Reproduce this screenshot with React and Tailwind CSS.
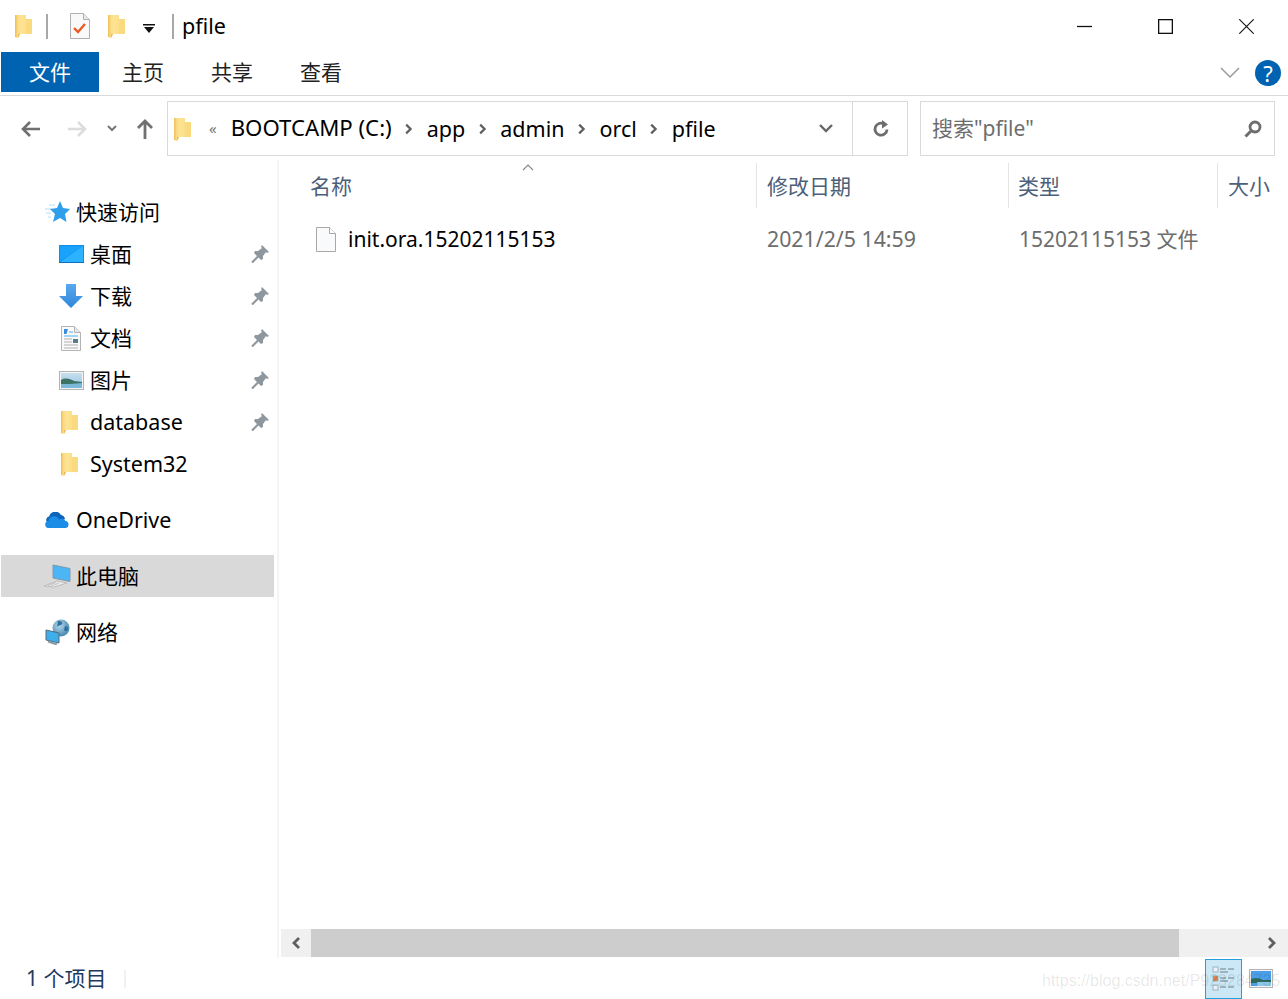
const Folder = ({ className = "" }) => (
  <svg viewBox="0 0 17 24" className={className}>
    <defs>
      <linearGradient id="fg" x1="0" y1="0" x2="1" y2="0">
        <stop offset="0" stopColor="#f7d16f" />
        <stop offset="0.3" stopColor="#fde394" />
        <stop offset="1" stopColor="#fbdb80" />
      </linearGradient>
    </defs>
    <path d="M0 1h11v4h6v15H5l-2 4-3-1z" fill="url(#fg)" />
    <path d="M11 5h6v15h-6z" fill="#fada7e" />
    <path d="M3 24V20h2z" fill="#e9bc58" />
    <path d="M0 1h1.500v22H0z" fill="#f0c460" />
  </svg>
);

const Pin = () => (
  <svg viewBox="0 0 18 18" className="h-[18px] w-[18px]">
    <path d="M11 0l7 7-2 1-1-1-3 4v3l-2 1-7-7 1-2h3l4-3-1-1z" fill="#8f979e" />
    <path d="M1 17.500l6-6" stroke="#8f979e" strokeWidth="2.200" />
  </svg>
);

const NavRow = ({ icon, label, pin, indent, selected, latin }) => (
  <div className={`flex h-[42px] items-center ${selected ? "ml-px w-[273px] bg-[#d9d9d9]" : "w-[274px]"}`}>
    <div className={`flex shrink-0 justify-center ${indent ? "ml-[56px] w-[30px]" : selected ? "ml-[41px] w-[30px]" : "ml-[42px] w-[30px]"}`}>{icon}</div>
    <span className={`ml-[4px] ${latin ? "text-[21.5px]" : "text-[21px]"} leading-none text-black`}>{label}</span>
    {pin && <span className="ml-auto mr-[5px] flex"><Pin /></span>}
  </div>
);

const Chevron = () => (
  <svg viewBox="0 0 10 14" className="mx-[13.5px] h-[12px] w-[8px] shrink-0">
    <path d="M1.500 1.500l5.500 5.500-5.500 5.500" fill="none" stroke="#5f5f5f" strokeWidth="2.800" />
  </svg>
);

const StarIcon = (
  <svg viewBox="0 0 26 22" className="h-[22px] w-[26px]">
    <path d="M1 8h7M2 12h5M4 16h3M5 4h6" stroke="#cfe9fb" strokeWidth="1.500" />
    <path d="M16 0l3 7 7 1-5 5 1.500 8-6.500-4-7 4 2-8-5-5 7-1z" fill="#2f9fec" />
  </svg>
);
const DesktopIcon = (
  <svg viewBox="0 0 25 18" className="h-[18px] w-[25px]">
    <rect width="25" height="18" fill="#0f8fe8" />
    <path d="M1 17L24 1v16z" fill="#2db2ff" />
    <path d="M1 1h23L1 16z" fill="#18a2fb" />
    <path d="M0 17h25v1H0z" fill="#0a70c0" />
  </svg>
);
const DownloadIcon = (
  <svg viewBox="0 0 24 24" className="h-[24px] w-[24px]">
    <defs>
      <linearGradient id="dl" x1="0" y1="0" x2="0" y2="1">
        <stop offset="0" stopColor="#5aa8ee" />
        <stop offset="1" stopColor="#2f86da" />
      </linearGradient>
    </defs>
    <path d="M7 0h10v12h7L12 24 0 12h7z" fill="url(#dl)" />
  </svg>
);
const DocIcon = (
  <svg viewBox="0 0 20 25" className="h-[25px] w-[20px]">
    <path d="M.5.500h13l6 6v18H.5z" fill="#fafafa" stroke="#b4b4b4" />
    <path d="M13.500.500v6h6" fill="#e6e6e6" stroke="#b4b4b4" />
    <path d="M3 3h4L5.500 8H3z" fill="#3a8be0" />
    <path d="M8 6h4M3 10h14" stroke="#8cc8f2" strokeWidth="1.500" />
    <path d="M3 13h8M3 16h8M3 19h14M3 22h14" stroke="#b0b0b0" />
    <rect x="12" y="13" width="5" height="4" fill="#5a7a8a" />
  </svg>
);
const PicIcon = (
  <svg viewBox="0 0 25 19" className="h-[19px] w-[25px]">
    <defs>
      <linearGradient id="sky" x1="0" y1="0" x2="0" y2="1">
        <stop offset="0" stopColor="#c9dfee" />
        <stop offset="1" stopColor="#8fc3e2" />
      </linearGradient>
    </defs>
    <rect x=".5" y=".5" width="24" height="18" fill="#f4f4f4" stroke="#b4b4b4" />
    <rect x="2" y="2" width="21" height="15" fill="url(#sky)" />
    <path d="M2 9c5-3 9-1 13 1l8 1v3H2z" fill="#3f7266" />
    <path d="M2 13h9l12-1v5H2z" fill="#7cb9d8" />
  </svg>
);
const CloudIcon = (
  <svg viewBox="0 0 25 16" className="h-[16px] w-[25px]">
    <path d="M3 11a3.500 3.500 0 0 1 1-6.500A6.500 6.500 0 0 1 16 3a5 5 0 0 1 4 4L12 11z" fill="#0d64b8" />
    <path d="M4 16a3.500 3.500 0 0 1-.5-7 5.500 5.500 0 0 1 10.500-1.500 4.500 4.500 0 0 1 6.500 1.500A3.600 3.600 0 0 1 21 16z" fill="#1c8de6" />
  </svg>
);
const PcIcon = (
  <svg viewBox="0 0 28 24" className="h-[24px] w-[28px]">
    <path d="M10 1l17 3.500v13L10 14z" fill="#4cb5f5" stroke="#7f99ab" />
    <path d="M1 22l13-5 10 2-13 4z" fill="#ececec" stroke="#bdbdbd" />
    <path d="M5 21.500l8-3M8 22l8-3" stroke="#c4c4c4" />
  </svg>
);
const NetIcon = (
  <svg viewBox="0 0 25 26" className="h-[26px] w-[25px]">
    <defs>
      <radialGradient id="gl" cx="0.4" cy="0.35" r="0.7">
        <stop offset="0" stopColor="#b7d8ea" />
        <stop offset="1" stopColor="#3f82ad" />
      </radialGradient>
    </defs>
    <circle cx="16" cy="9" r="8.500" fill="url(#gl)" />
    <path d="M13 2c3 0 5 1 4 3s-4 1-5 3M20 7c2 0 3 1 3 3s-3 3-4 1z" fill="#2f6f9c" />
    <path d="M1 11l13 3v10L1 21z" fill="#3eaeea" stroke="#516b80" />
    <path d="M3 22.500l9 3" stroke="#8a9aa5" strokeWidth="2" />
  </svg>
);

const Hdr = ({ w, children, sep = true, className = "" }) => (
  <div className={`flex h-[45px] shrink-0 items-center ${sep ? "border-r border-[#e5e5e5]" : ""} ${w} ${className}`}>
    <span className="mt-[2px] text-[21px] leading-none text-[#4c607a]">{children}</span>
  </div>
);

export default function App() {
  return (
    <div className="relative flex h-[999px] w-[1288px] flex-col overflow-hidden bg-white [font-family:'Noto_Sans','Noto_Sans_CJK_SC',sans-serif]">
      {/* Title bar */}
      <div className="flex h-[52px] shrink-0 items-center">
        <Folder className="ml-[15px] h-[24px] w-[17px]" />
        <div className="ml-[14px] h-[25px] w-[2px] bg-[#a8a8a8]" />
        <svg viewBox="0 0 20 26" className="ml-[22px] h-[26px] w-[20px]">
          <path d="M.5.500h13l6 6v19H.5z" fill="#f9f9f9" stroke="#b0b0b0" />
          <path d="M13.500.500v6h6" fill="#e8e8e8" stroke="#b0b0b0" />
          <path d="M4 15l4 4 7-8" fill="none" stroke="#ec5a24" strokeWidth="2.400" />
        </svg>
        <Folder className="ml-[18px] h-[24px] w-[17px]" />
        <svg viewBox="0 0 12 10" className="ml-[18px] mt-[6px] h-[10px] w-[12px]">
          <path d="M0 0h12v1.500H0zM1 3h10L6 9z" fill="#111" />
        </svg>
        <div className="ml-[17px] h-[25px] w-[2px] bg-[#a8a8a8]" />
        <span className="ml-[8px] text-[21.5px] leading-none text-black">pfile</span>
        <svg viewBox="0 0 15 15" className="ml-auto h-[15px] w-[15px]">
          <path d="M0 7.500h15" stroke="#111" strokeWidth="1.300" />
        </svg>
        <svg viewBox="0 0 15 15" className="ml-[66px] h-[15px] w-[15px]">
          <rect x=".65" y=".65" width="13.700" height="13.700" fill="none" stroke="#111" strokeWidth="1.300" />
        </svg>
        <svg viewBox="0 0 15 15" className="ml-[66px] mr-[34px] h-[15px] w-[15px]">
          <path d="M.3.300l14.400 14.400M14.700.300L.3 14.700" stroke="#111" strokeWidth="1.100" />
        </svg>
      </div>

      {/* Ribbon tabs */}
      <div className="flex h-[44px] shrink-0 items-start border-b border-[#dadada]">
        <div className="ml-px flex h-[40px] w-[98px] items-center justify-center bg-[#0063b1] text-[21px] leading-none text-white">文件</div>
        <span className="ml-[23px] flex h-[40px] items-center text-[21px] leading-none text-[#222]">主页</span>
        <span className="ml-[47px] flex h-[40px] items-center text-[21px] leading-none text-[#222]">共享</span>
        <span className="ml-[47px] flex h-[40px] items-center text-[21px] leading-none text-[#222]">查看</span>
        <svg viewBox="0 0 20 12" className="ml-auto mt-[15px] h-[12px] w-[20px]">
          <path d="M1 1l9 9 9-9" fill="none" stroke="#9a9a9a" strokeWidth="1.500" />
        </svg>
        <div className="ml-[15px] mr-[7px] mt-[8px] flex h-[26px] w-[26px] items-center justify-center rounded-full bg-[#0063b1] text-[22px] leading-none text-white">?</div>
      </div>

      {/* Nav bar */}
      <div className="flex h-[64px] shrink-0 items-start pt-[5px]">
        <div className="flex h-[55px] w-[167px] shrink-0 items-center">
          <svg viewBox="0 0 20 18" className="ml-[21px] h-[18px] w-[20px]">
            <path d="M19 9H3M9 2L2 9l7 7" fill="none" stroke="#707070" strokeWidth="2.600" />
          </svg>
          <svg viewBox="0 0 20 18" className="ml-[26px] h-[18px] w-[20px]">
            <path d="M1 9h16M11 2l7 7-7 7" fill="none" stroke="#dcdcdc" strokeWidth="2.600" />
          </svg>
          <svg viewBox="0 0 12 8" className="ml-[19px] h-[8px] w-[12px]">
            <path d="M2 1l4 4 4-4" fill="none" stroke="#777" strokeWidth="2" />
          </svg>
          <svg viewBox="0 0 18 20" className="ml-[18px] h-[20px] w-[18px]">
            <path d="M9 20V3M2 9l7-7 7 7" fill="none" stroke="#707070" strokeWidth="2.800" />
          </svg>
        </div>
        <div className="flex h-[55px] w-[741px] shrink-0 items-center border border-[#d9d9d9]">
          <Folder className="ml-[6px] h-[24px] w-[17px]" />
          <span className="ml-[18px] mr-[14px] text-[15px] leading-none text-[#777]">«</span>
          <span className="text-[22.2px] leading-none text-black">BOOTCAMP (C:)</span>
          <Chevron />
          <span className="text-[21.5px] leading-none text-black">app</span>
          <Chevron />
          <span className="text-[21.5px] leading-none text-black">admin</span>
          <Chevron />
          <span className="text-[21.5px] leading-none text-black">orcl</span>
          <Chevron />
          <span className="text-[21.5px] leading-none text-black">pfile</span>
          <svg viewBox="0 0 16 10" className="ml-auto mr-[18px] h-[10px] w-[16px]">
            <path d="M2 1l6 6 6-6" fill="none" stroke="#666" strokeWidth="2.400" />
          </svg>
          <div className="flex h-full w-[55px] items-center justify-center border-l border-[#d9d9d9] pl-[1px]">
            <svg viewBox="0 0 18 18" className="h-[18px] w-[18px]">
              <path d="M15 9.500A6 6 0 1 1 12 4" fill="none" stroke="#6d6d6d" strokeWidth="2.800" />
              <path d="M10 0l6 4.500-6 4z" fill="#6d6d6d" />
            </svg>
          </div>
        </div>
        <div className="ml-[12px] flex h-[55px] w-[355px] shrink-0 items-center border border-[#d9d9d9] pl-[11px]">
          <span className="text-[21px] leading-none text-[#6d6d6d]">搜索"pfile"</span>
          <svg viewBox="0 0 18 18" className="ml-auto mr-[12px] h-[18px] w-[18px]">
            <circle cx="11" cy="7" r="5" fill="none" stroke="#6d6d6d" strokeWidth="2.800" />
            <path d="M7 11l-5.500 5.500" stroke="#6d6d6d" strokeWidth="3" />
          </svg>
        </div>
      </div>

      {/* Main */}
      <div className="flex min-h-0 flex-1">
        <aside className="w-[279px] shrink-0 border-r-2 border-[#f5f5f5] pt-[31px]">
          <NavRow icon={StarIcon} label="快速访问" />
          <NavRow indent icon={DesktopIcon} label="桌面" pin />
          <NavRow indent icon={DownloadIcon} label="下载" pin />
          <NavRow indent icon={DocIcon} label="文档" pin />
          <NavRow indent icon={PicIcon} label="图片" pin />
          <NavRow indent latin icon={<Folder className="-ml-[3px] h-[24px] w-[17px]" />} label="database" pin />
          <NavRow indent latin icon={<Folder className="-ml-[3px] h-[24px] w-[17px]" />} label="System32" />
          <div className="mt-[14px]"><NavRow latin icon={CloudIcon} label="OneDrive" /></div>
          <div className="mt-[14px]"><NavRow selected icon={PcIcon} label="此电脑" /></div>
          <div className="mt-[14px]"><NavRow icon={NetIcon} label="网络" /></div>
        </aside>
        <section className="flex min-w-0 flex-1 flex-col">
          <div className="flex-1">
            <div className="relative flex pt-[3px]">
              <svg viewBox="0 0 12 7" className="absolute left-[243px] top-[4px] h-[7px] w-[12px]">
                <path d="M1 6l5-5 5 5" fill="none" stroke="#8a8a8a" strokeWidth="1.200" />
              </svg>
              <Hdr w="w-[478px]" className="pl-[31px]">名称</Hdr>
              <Hdr w="w-[252px]" className="pl-[10px]">修改日期</Hdr>
              <Hdr w="w-[209px]" className="pl-[9px]">类型</Hdr>
              <Hdr w="w-[70px]" sep={false} className="pl-[10px]">大小</Hdr>
            </div>
            <div className="mt-[10px] flex h-[42px] items-center">
              <svg viewBox="0 0 20 25" className="ml-[37px] h-[25px] w-[20px] shrink-0">
                <path d="M.5.500h13l6 6v18H.5z" fill="#f9fafb" stroke="#a8a8a8" />
                <path d="M13.500.500v6h6" fill="#fff" stroke="#a8a8a8" />
              </svg>
              <span className="ml-[12px] w-[419px] shrink-0 text-[21px] leading-none text-black">init.ora.15202115153</span>
              <span className="w-[252px] shrink-0 text-[21.3px] leading-none text-[#6d6d6d]">2021/2/5 14:59</span>
              <span className="text-[21px] leading-none text-[#6d6d6d]">15202115153 文件</span>
            </div>
          </div>
          <div className="mb-px ml-[2px] flex h-[28px] shrink-0 items-center bg-[#f0f0f0]">
            <div className="flex h-full w-[30px] items-center justify-center">
              <svg viewBox="0 0 10 14" className="h-[14px] w-[10px]"><path d="M8 2L3 7l5 5" fill="none" stroke="#606060" strokeWidth="2.800" /></svg>
            </div>
            <div className="h-full w-[868px] bg-[#cdcdcd]" />
            <div className="ml-auto flex h-full w-[33px] items-center justify-center">
              <svg viewBox="0 0 10 14" className="h-[14px] w-[10px]"><path d="M2 2l5 5-5 5" fill="none" stroke="#606060" strokeWidth="2.800" /></svg>
            </div>
          </div>
        </section>
      </div>

      {/* Status bar */}
      <div className="flex h-[41px] shrink-0 items-center">
        <span className="ml-[26px] text-[21px] leading-none text-[#1e3a5f]">1 个项目</span>
        <div className="ml-[18px] h-[18px] w-[2px] bg-[#f0f0f0]" />
        <div className="ml-auto flex h-[40px] w-[37px] items-center justify-center border border-[#26a0da] bg-[#cce8f6]">
          <svg viewBox="0 0 26 26" className="h-[26px] w-[26px]">
            <rect x="2" y="1" width="5" height="5" fill="#eef" stroke="#8aa" strokeWidth=".8" />
            <rect x="2" y="10" width="5" height="5" fill="#e8804a" stroke="#8aa" strokeWidth=".8" />
            <rect x="2" y="19" width="5" height="5" fill="#eef" stroke="#8aa" strokeWidth=".8" />
            <path d="M9 3h6M17 3h6M9 6h8M9 12h6M17 12h6M9 15h8M9 21h6M17 21h6" stroke="#6f7f88" strokeWidth="1" />
          </svg>
        </div>
        <svg viewBox="0 0 24 19" className="ml-[7px] mr-[15px] h-[19px] w-[24px]">
          <rect x=".5" y=".5" width="23" height="18" fill="#f4f4f4" stroke="#b4b4b4" />
          <rect x="2" y="2" width="20" height="15" fill="#4a9ee8" />
          <path d="M2 10c5-2 8-1 12 1l8 0v3H2z" fill="#2e6a5e" />
          <path d="M8 13h14v4H8z" fill="#8cc8ea" />
        </svg>
      </div>

      {/* Watermark */}
      <span className="absolute left-[1042px] top-[970px] whitespace-nowrap text-[16px] leading-[22px] text-black/10 [font-family:'Liberation_Sans',sans-serif]">https://blog.csdn.net/P923284735</span>
    </div>
  );
}
